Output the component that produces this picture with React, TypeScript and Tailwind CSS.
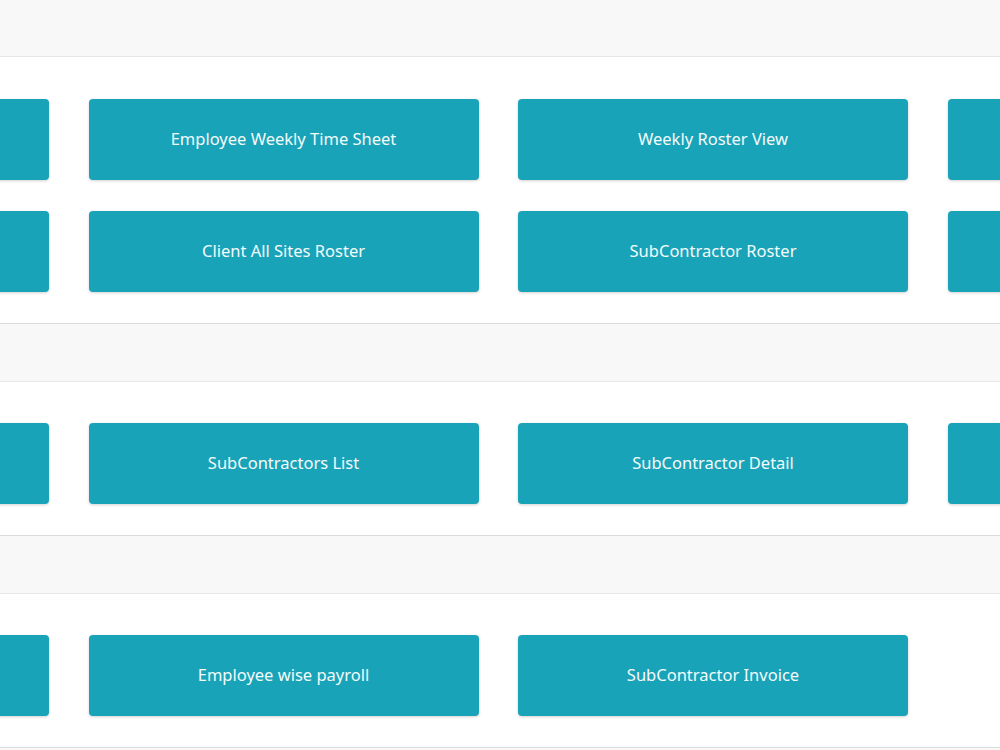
import React from "react";

const Btn = ({ label }: { label: string }) => (
  <div className="h-[81px] rounded-[4px] bg-[#19a3b8] text-[#f4fbfc] flex items-center justify-center text-[16.5px] shadow-[0_1px_3px_rgba(0,0,0,0.18)]">
    {label}
  </div>
);

const Grid = ({ items }: { items: (string | null)[] }) => (
  <div className="ml-[-341px] grid grid-cols-[repeat(4,390px)] gap-x-[39.5px] gap-y-[31px]">
    {items.map((t, i) =>
      t === null ? <div key={i} /> : <Btn key={i} label={t} />
    )}
  </div>
);

export default function App() {
  return (
    <div
      className="w-[1000px] h-[750px] overflow-hidden bg-white"
      style={{ fontFamily: '"Segoe UI", "Noto Sans", "Open Sans", sans-serif' }}
    >
      <div className="h-[57px] bg-[#f8f8f8] border-b border-[#e6e6e6]" />
      <div className="pt-[42px] pb-[31px]">
        <Grid
          items={[
            "",
            "Employee Weekly Time Sheet",
            "Weekly Roster View",
            "",
            "",
            "Client All Sites Roster",
            "SubContractor Roster",
            "",
          ]}
        />
      </div>
      <div className="border-t border-[#dadada] h-[59px] bg-[#f8f8f8] border-b border-b-[#e8e8e8]" />
      <div className="pt-[41px] pb-[31px]">
        <Grid items={["", "SubContractors List", "SubContractor Detail", ""]} />
      </div>
      <div className="border-t border-[#dadada] h-[59px] bg-[#f8f8f8] border-b border-b-[#e8e8e8]" />
      <div className="pt-[41px] pb-[31px]">
        <Grid items={["", "Employee wise payroll", "SubContractor Invoice", null]} />
      </div>
      <div className="border-t border-[#dadada] h-[40px] bg-[#f8f8f8]" />
    </div>
  );
}
